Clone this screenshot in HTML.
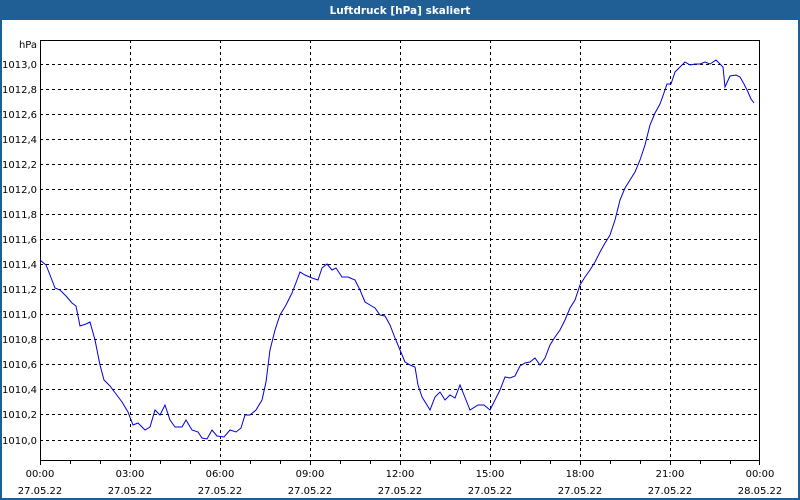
<!DOCTYPE html>
<html><head><meta charset="utf-8"><style>
html,body{margin:0;padding:0;background:#fff;}
body{width:800px;height:500px;overflow:hidden;position:relative;font-family:"DejaVu Sans","Liberation Sans",sans-serif;}
</style></head><body>
<svg width="800" height="500" xmlns="http://www.w3.org/2000/svg" style="position:absolute;left:0;top:0" font-family="DejaVu Sans, Liberation Sans, sans-serif" font-size="10">
<rect x="0" y="0" width="800" height="500" fill="#1f5f96"/>
<rect x="2" y="20" width="796" height="478" fill="#fff"/>
<text x="400" y="14" fill="#fff" font-weight="bold" font-size="10.5" text-anchor="middle">Luftdruck [hPa] skaliert</text>
<g stroke="#000" stroke-width="1" stroke-dasharray="3,3" shape-rendering="crispEdges">
<line x1="40" y1="64.5" x2="760" y2="64.5"/><line x1="40" y1="89.5" x2="760" y2="89.5"/><line x1="40" y1="114.5" x2="760" y2="114.5"/><line x1="40" y1="139.5" x2="760" y2="139.5"/><line x1="40" y1="164.5" x2="760" y2="164.5"/><line x1="40" y1="189.5" x2="760" y2="189.5"/><line x1="40" y1="214.5" x2="760" y2="214.5"/><line x1="40" y1="239.5" x2="760" y2="239.5"/><line x1="40" y1="264.5" x2="760" y2="264.5"/><line x1="40" y1="289.5" x2="760" y2="289.5"/><line x1="40" y1="314.5" x2="760" y2="314.5"/><line x1="40" y1="339.5" x2="760" y2="339.5"/><line x1="40" y1="364.5" x2="760" y2="364.5"/><line x1="40" y1="389.5" x2="760" y2="389.5"/><line x1="40" y1="414.5" x2="760" y2="414.5"/><line x1="40" y1="440.5" x2="760" y2="440.5"/>
<line x1="130.5" y1="40" x2="130.5" y2="461"/><line x1="220.5" y1="40" x2="220.5" y2="461"/><line x1="310.5" y1="40" x2="310.5" y2="461"/><line x1="400.5" y1="40" x2="400.5" y2="461"/><line x1="490.5" y1="40" x2="490.5" y2="461"/><line x1="580.5" y1="40" x2="580.5" y2="461"/><line x1="670.5" y1="40" x2="670.5" y2="461"/>
</g>
<g stroke="#000" stroke-width="1" shape-rendering="crispEdges" fill="none">
<rect x="40.5" y="40.5" width="719" height="420"/>
<path d="M40.5 461v4M70.5 461v3M100.5 461v3M130.5 461v4M160.5 461v3M190.5 461v3M220.5 461v4M250.5 461v3M280.5 461v3M310.5 461v4M340.5 461v3M370.5 461v3M400.5 461v4M430.5 461v3M460.5 461v3M490.5 461v4M520.5 461v3M550.5 461v3M580.5 461v4M610.5 461v3M640.5 461v3M670.5 461v4M700.5 461v3M730.5 461v3M759.5 461v4"/>
</g>
<g fill="#000" text-anchor="end">
<text x="37" y="48">hPa</text>
<text x="37" y="68">1013,0</text><text x="37" y="93">1012,8</text><text x="37" y="118">1012,6</text><text x="37" y="143">1012,4</text><text x="37" y="168">1012,2</text><text x="37" y="193">1012,0</text><text x="37" y="218">1011,8</text><text x="37" y="243">1011,6</text><text x="37" y="268">1011,4</text><text x="37" y="293">1011,2</text><text x="37" y="318">1011,0</text><text x="37" y="343">1010,8</text><text x="37" y="368">1010,6</text><text x="37" y="393">1010,4</text><text x="37" y="418">1010,2</text><text x="37" y="444">1010,0</text>
</g>
<g fill="#000" text-anchor="middle">
<text x="40" y="477">00:00</text><text x="40" y="494">27.05.22</text>
<text x="130" y="477">03:00</text><text x="130" y="494">27.05.22</text>
<text x="220" y="477">06:00</text><text x="220" y="494">27.05.22</text>
<text x="310" y="477">09:00</text><text x="310" y="494">27.05.22</text>
<text x="400" y="477">12:00</text><text x="400" y="494">27.05.22</text>
<text x="490" y="477">15:00</text><text x="490" y="494">27.05.22</text>
<text x="580" y="477">18:00</text><text x="580" y="494">27.05.22</text>
<text x="670" y="477">21:00</text><text x="670" y="494">27.05.22</text>
<text x="760" y="477">00:00</text><text x="760" y="494">28.05.22</text>
</g>
<polyline fill="none" stroke="#0000e0" stroke-width="1" points="40,260 46,265 50,275 55,288 60,290 66,296 72,303 76,306 80,326 86,324 90,322 95,340 100,365 104,380 110,386 116,394 122,402 128,412 133,425 138,423 145,430 150,427 155,410 160,415 165,405 170,420 175,427 182,427 186,420 192,430 198,432 202,438 207,439 212,430 217,436 224,437 230,430 236,432 241,428 245,415 250,415 256,410 262,400 266,382 270,350 275,330 280,315 286,305 292,293 297,280 300,272 305,275 312,278 318,280 322,268 327,264 332,270 336,268 342,277 348,277 355,280 360,290 365,302 370,305 375,308 380,315 385,316 390,325 395,338 400,350 405,362 410,365 415,367 418,385 422,397 427,405 430,410 435,397 440,392 445,400 450,395 455,398 460,385 466,400 470,410 478,405 484,405 490,410 495,400 500,390 505,377 510,378 515,376 520,366 525,363 530,362 535,358 540,365 545,358 550,345 555,337 560,330 565,320 570,308 575,300 580,285 585,277 590,270 595,262 600,252 605,243 610,235 615,220 620,200 625,188 630,180 635,172 640,160 645,145 650,125 655,113 660,104 665,90 667,84 671,84 675,72 680,67 685,62 690,65 695,64 700,64 705,62 710,64 716,60 720,64 723,67 725,87 730,76 736,75 740,77 744,84 748,92 751,99 754,103"/>
</svg>
</body></html>
